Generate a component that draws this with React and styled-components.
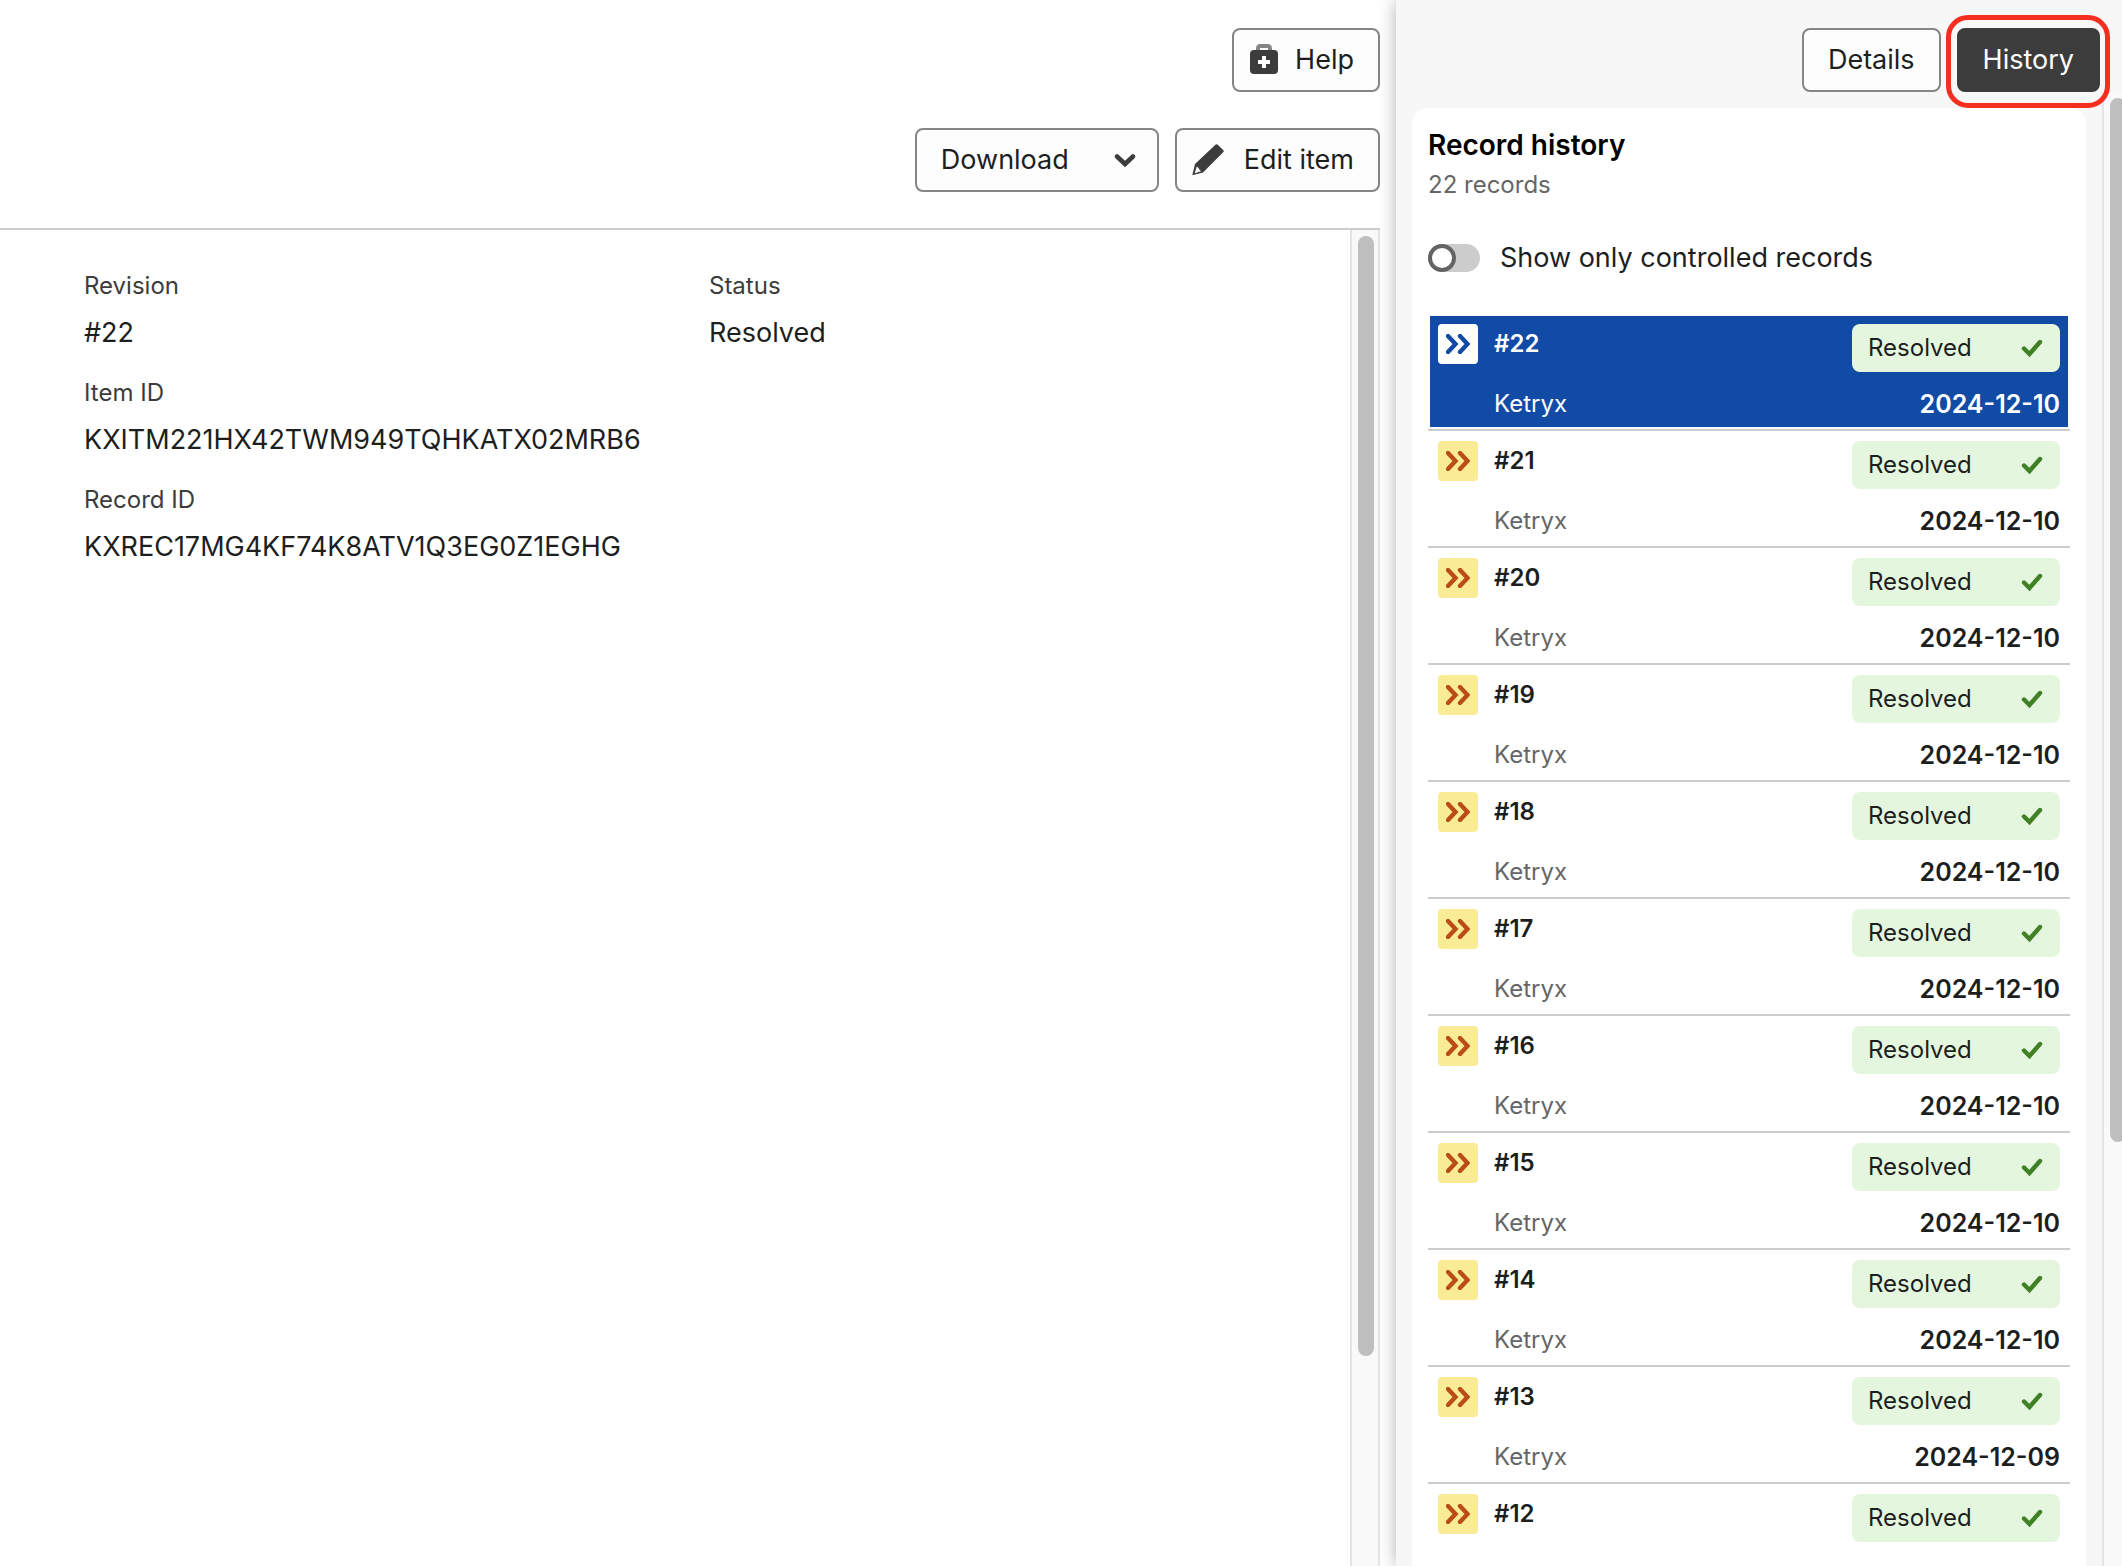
import React, { useState } from 'react';
import styled, { createGlobalStyle } from 'styled-components'

const GlobalStyle = createGlobalStyle`
  *, *::before, *::after {
    box-sizing: border-box;
  }

  body {
    margin: 0;
    background: #fff;
    color: #1d1f1f;
    font-family: Inter, "Liberation Sans", sans-serif;
    font-size: 27px;
    line-height: 40px;
  }
`

const Layout = styled.div`
  display: flex;
  height: 100vh;
  overflow: hidden;
`

const Main = styled.main`
  flex: 1;
  min-width: 0;
  display: flex;
  flex-direction: column;
  padding-right: 16px;
`

const Toolbar = styled.div`
  display: flex;
  justify-content: flex-end;
  gap: 16px;
  padding: ${({ $last }) => ($last ? '36px 0' : '28px 0 0')};
`

const Button = styled.button`
  display: inline-flex;
  align-items: center;
  height: 64px;
  padding: 0 24px;
  border: 2px solid ${({ $active }) => ($active ? '#3c3c3c' : '#858585')};
  border-radius: 8px;
  background: ${({ $active }) => ($active ? '#3c3c3c' : '#fdfdfd')};
  color: ${({ $active }) => ($active ? '#fff' : '#1d1f1f')};
  font: inherit;
  cursor: pointer;
`

const IconButton = styled(Button)`
  padding-left: 14px;
  gap: 13px;
`

const MenuButton = styled(Button)`
  padding-right: 16px;
  gap: 40px;
`

const MainScroll = styled.div`
  flex: 1;
  min-height: 0;
  display: flex;
  border-top: 2px solid #ccc;
`

const Fields = styled.dl`
  flex: 1;
  display: grid;
  grid-template-columns: 1fr 1fr;
  align-content: start;
  row-gap: 24px;
  margin: 0;
  padding: 40px 16px 0 84px;
`

const Field = styled.div`
  grid-column: ${({ $column }) => $column};
`

const FieldLabel = styled.dt`
  margin-bottom: 11px;
  color: #3c3c3c;
  font-size: 24px;
  line-height: 32px;
`

const FieldValue = styled.dd`
  margin: 0;
`

const ScrollTrack = styled.div`
  width: ${({ $cut }) => ($cut ? '20px' : '30px')};
  padding: 6px 0 0 6px;
  overflow: hidden;
  background: #f9f9f9;
  border-left: 2px solid #e4e4e4;
  border-right: ${({ $cut }) => ($cut ? '0' : '2px solid #e4e4e4')};
`

const ScrollThumb = styled.div`
  width: 16px;
  height: ${({ $size }) => $size};
  border-radius: 8px;
  background: #bfbfbf;
`

const SidePanel = styled.aside`
  flex: 0 0 726px;
  display: flex;
  flex-direction: column;
  background: #f7f7f7;
  box-shadow: 0 0 16px rgba(0, 0, 0, 0.3);
`

const Tabs = styled.div`
  display: flex;
  justify-content: flex-end;
  gap: 16px;
  padding: 28px 22px 0 0;
`

const Highlight = styled.div`
  position: relative;
  display: flex;

  &::after {
    content: '';
    position: absolute;
    inset: -13px -10px -16px -11px;
    border: 5px solid #f52f20;
    border-radius: 22px;
    pointer-events: none;
  }
`

const PanelScroll = styled.div`
  flex: 1;
  min-height: 0;
  display: flex;
`

const Card = styled.section`
  flex: 1;
  margin: 16px 16px 0;
  padding: 17px 16px 0;
  overflow: hidden;
  border-radius: 16px 16px 0 0;
  background: #fff;
`

const CardTitle = styled.h2`
  margin: 0;
  color: #000;
  font-size: 28px;
  font-weight: 600;
  line-height: 40px;
`

const RecordCount = styled.p`
  margin: 4px 0 36px;
  color: #666;
  font-size: 24px;
  line-height: 32px;
`

const SwitchLabel = styled.label`
  display: flex;
  align-items: center;
  gap: 20px;
  height: 42px;
  margin-bottom: 35px;
`

const Switch = styled.input`
  appearance: none;
  position: relative;
  width: 52px;
  height: 28px;
  margin: 0;
  border-radius: 14px;
  background: #ccc;
  cursor: pointer;

  &::before {
    content: '';
    position: absolute;
    top: 0;
    left: 0;
    width: 28px;
    height: 28px;
    border: 4px solid #636363;
    border-radius: 50%;
    background: #fff;
  }

  &:checked::before {
    left: 24px;
  }
`

const RecordList = styled.ul`
  margin: 0;
  padding: 0;
  list-style: none;
`

const RecordItem = styled.li`
  border-bottom: 2px solid #ccc;
`

const RecordButton = styled.button`
  display: grid;
  grid-template-columns: 40px 1fr 208px;
  grid-template-rows: 48px 32px;
  column-gap: 16px;
  row-gap: 16px;
  width: 100%;
  padding: 8px 8px 7px;
  border: 2px solid #fff;
  background: ${({ $selected }) => ($selected ? '#114ba5' : '#fff')};
  color: ${({ $selected }) => ($selected ? '#fff' : '#1d1f1f')};
  font: inherit;
  font-size: 24px;
  line-height: 32px;
  text-align: left;
  cursor: pointer;
`

const RecordIcon = styled.span`
  display: flex;
  align-items: center;
  justify-content: center;
  width: 40px;
  height: 40px;
  border-radius: 4px;
  background: ${({ $selected }) => ($selected ? '#fff' : '#faec96')};
  color: ${({ $selected }) => ($selected ? '#114ba5' : '#bb4c17')};
`

const Revision = styled.span`
  font-weight: 600;
  line-height: 40px;
`

const StatusBadge = styled.span`
  display: flex;
  align-items: center;
  justify-content: space-between;
  padding: 0 16px;
  border-radius: 8px;
  background: #e4f6de;
  color: #1d1f1f;
`

const Author = styled.span`
  grid-column: 2;
  color: ${({ $selected }) => ($selected ? '#fff' : '#666')};
`

const RecordDate = styled.time`
  font-size: 25px;
  font-weight: 600;
  text-align: right;
`

const HelpIcon = () => (
  <svg width="34" height="34" viewBox="-2 0 34 34" aria-hidden="true">
    <path d="M8 8V5.500Q8 3 10.500 3H17.500Q20 3 20 5.500V8" fill="none" stroke="#858585" strokeWidth="4" />
    <rect x="0" y="7" width="28" height="24" rx="4" fill="#3c3c3c" />
    <path d="M8 19H20M14 13V25" stroke="#fff" strokeWidth="4" />
  </svg>
)

const PencilIcon = () => (
  <svg width="40" height="34" viewBox="0 0 40 34" aria-hidden="true">
    <path
      fill="#3c3c3c"
      fillRule="evenodd"
      d="M24.700 1.600Q25.600 .8 26.500 1.600L32.400 7.300Q33.200 8.200 32.400 9L12 29.600L1.300 32.300L4 20.900ZM5.800 23.600L3.700 30.300L10.200 28.200L8.700 26.900L7.300 24.700Z"
    />
  </svg>
)

const ChevronIcon = () => (
  <svg width="32" height="32" viewBox="0 0 32 32" aria-hidden="true">
    <path d="M8 12.500L16 20L24 12.500" fill="none" stroke="#3c3c3c" strokeWidth="4.600" strokeLinecap="round" />
  </svg>
)

const DoubleChevronIcon = () => (
  <svg width="24" height="20" viewBox="0 0 24 20" aria-hidden="true">
    <path
      d="M2 2L9.500 10L2 18M14 2L21.500 10L14 18"
      fill="none"
      stroke="currentColor"
      strokeWidth="4.400"
      strokeLinecap="round"
    />
  </svg>
)

const CheckIcon = () => (
  <svg width="24" height="20" viewBox="0 0 24 20" aria-hidden="true">
    <path d="M4 10.500L9.500 16L20 4" fill="none" stroke="#3f8124" strokeWidth="4.400" strokeLinecap="round" />
  </svg>
)

const fields = [
  { label: 'Revision', value: '#22', column: 1 },
  { label: 'Status', value: 'Resolved', column: 2 },
  { label: 'Item ID', value: 'KXITM221HX42TWM949TQHKATX02MRB6', column: 1 },
  { label: 'Record ID', value: 'KXREC17MG4KF74K8ATV1Q3EG0Z1EGHG', column: 1 }
]

const records = [
  { revision: 22, author: 'Ketryx', date: '2024-12-10' },
  { revision: 21, author: 'Ketryx', date: '2024-12-10' },
  { revision: 20, author: 'Ketryx', date: '2024-12-10' },
  { revision: 19, author: 'Ketryx', date: '2024-12-10' },
  { revision: 18, author: 'Ketryx', date: '2024-12-10' },
  { revision: 17, author: 'Ketryx', date: '2024-12-10' },
  { revision: 16, author: 'Ketryx', date: '2024-12-10' },
  { revision: 15, author: 'Ketryx', date: '2024-12-10' },
  { revision: 14, author: 'Ketryx', date: '2024-12-10' },
  { revision: 13, author: 'Ketryx', date: '2024-12-09' },
  { revision: 12 }
]

const Record = ({ record, selected, onSelect }) => (
  <RecordItem>
    <RecordButton $selected={selected} aria-pressed={selected} onClick={onSelect}>
      <RecordIcon $selected={selected}>
        <DoubleChevronIcon />
      </RecordIcon>
      <Revision>#{record.revision}</Revision>
      <StatusBadge>
        Resolved
        <CheckIcon />
      </StatusBadge>
      {record.author && <Author $selected={selected}>{record.author}</Author>}
      {record.date && <RecordDate dateTime={record.date}>{record.date}</RecordDate>}
    </RecordButton>
  </RecordItem>
)

function App() {
  const [selected, setSelected] = useState(22)
  const [onlyControlled, setOnlyControlled] = useState(false)

  return (
    <Layout>
      <GlobalStyle />
      <Main>
        <Toolbar>
          <IconButton>
            <HelpIcon />
            Help
          </IconButton>
        </Toolbar>
        <Toolbar $last>
          <MenuButton aria-haspopup="menu">
            Download
            <ChevronIcon />
          </MenuButton>
          <IconButton>
            <PencilIcon />
            Edit item
          </IconButton>
        </Toolbar>
        <MainScroll>
          <Fields>
            {fields.map(({ label, value, column }) => (
              <Field key={label} $column={column}>
                <FieldLabel>{label}</FieldLabel>
                <FieldValue>{value}</FieldValue>
              </Field>
            ))}
          </Fields>
          <ScrollTrack>
            <ScrollThumb $size="84.2%" />
          </ScrollTrack>
        </MainScroll>
      </Main>
      <SidePanel>
        <Tabs>
          <Button>Details</Button>
          <Highlight>
            <Button $active>History</Button>
          </Highlight>
        </Tabs>
        <PanelScroll>
          <Card>
            <CardTitle>Record history</CardTitle>
            <RecordCount>22 records</RecordCount>
            <SwitchLabel>
              <Switch
                type="checkbox"
                role="switch"
                checked={onlyControlled}
                onChange={(e) => setOnlyControlled(e.target.checked)}
              />
              Show only controlled records
            </SwitchLabel>
            <RecordList>
              {records.map((record) => (
                <Record
                  key={record.revision}
                  record={record}
                  selected={record.revision === selected}
                  onSelect={() => setSelected(record.revision)}
                />
              ))}
            </RecordList>
          </Card>
          <ScrollTrack $cut>
            <ScrollThumb $size="71.1%" />
          </ScrollTrack>
        </PanelScroll>
      </SidePanel>
    </Layout>
  );
}

export default App;
